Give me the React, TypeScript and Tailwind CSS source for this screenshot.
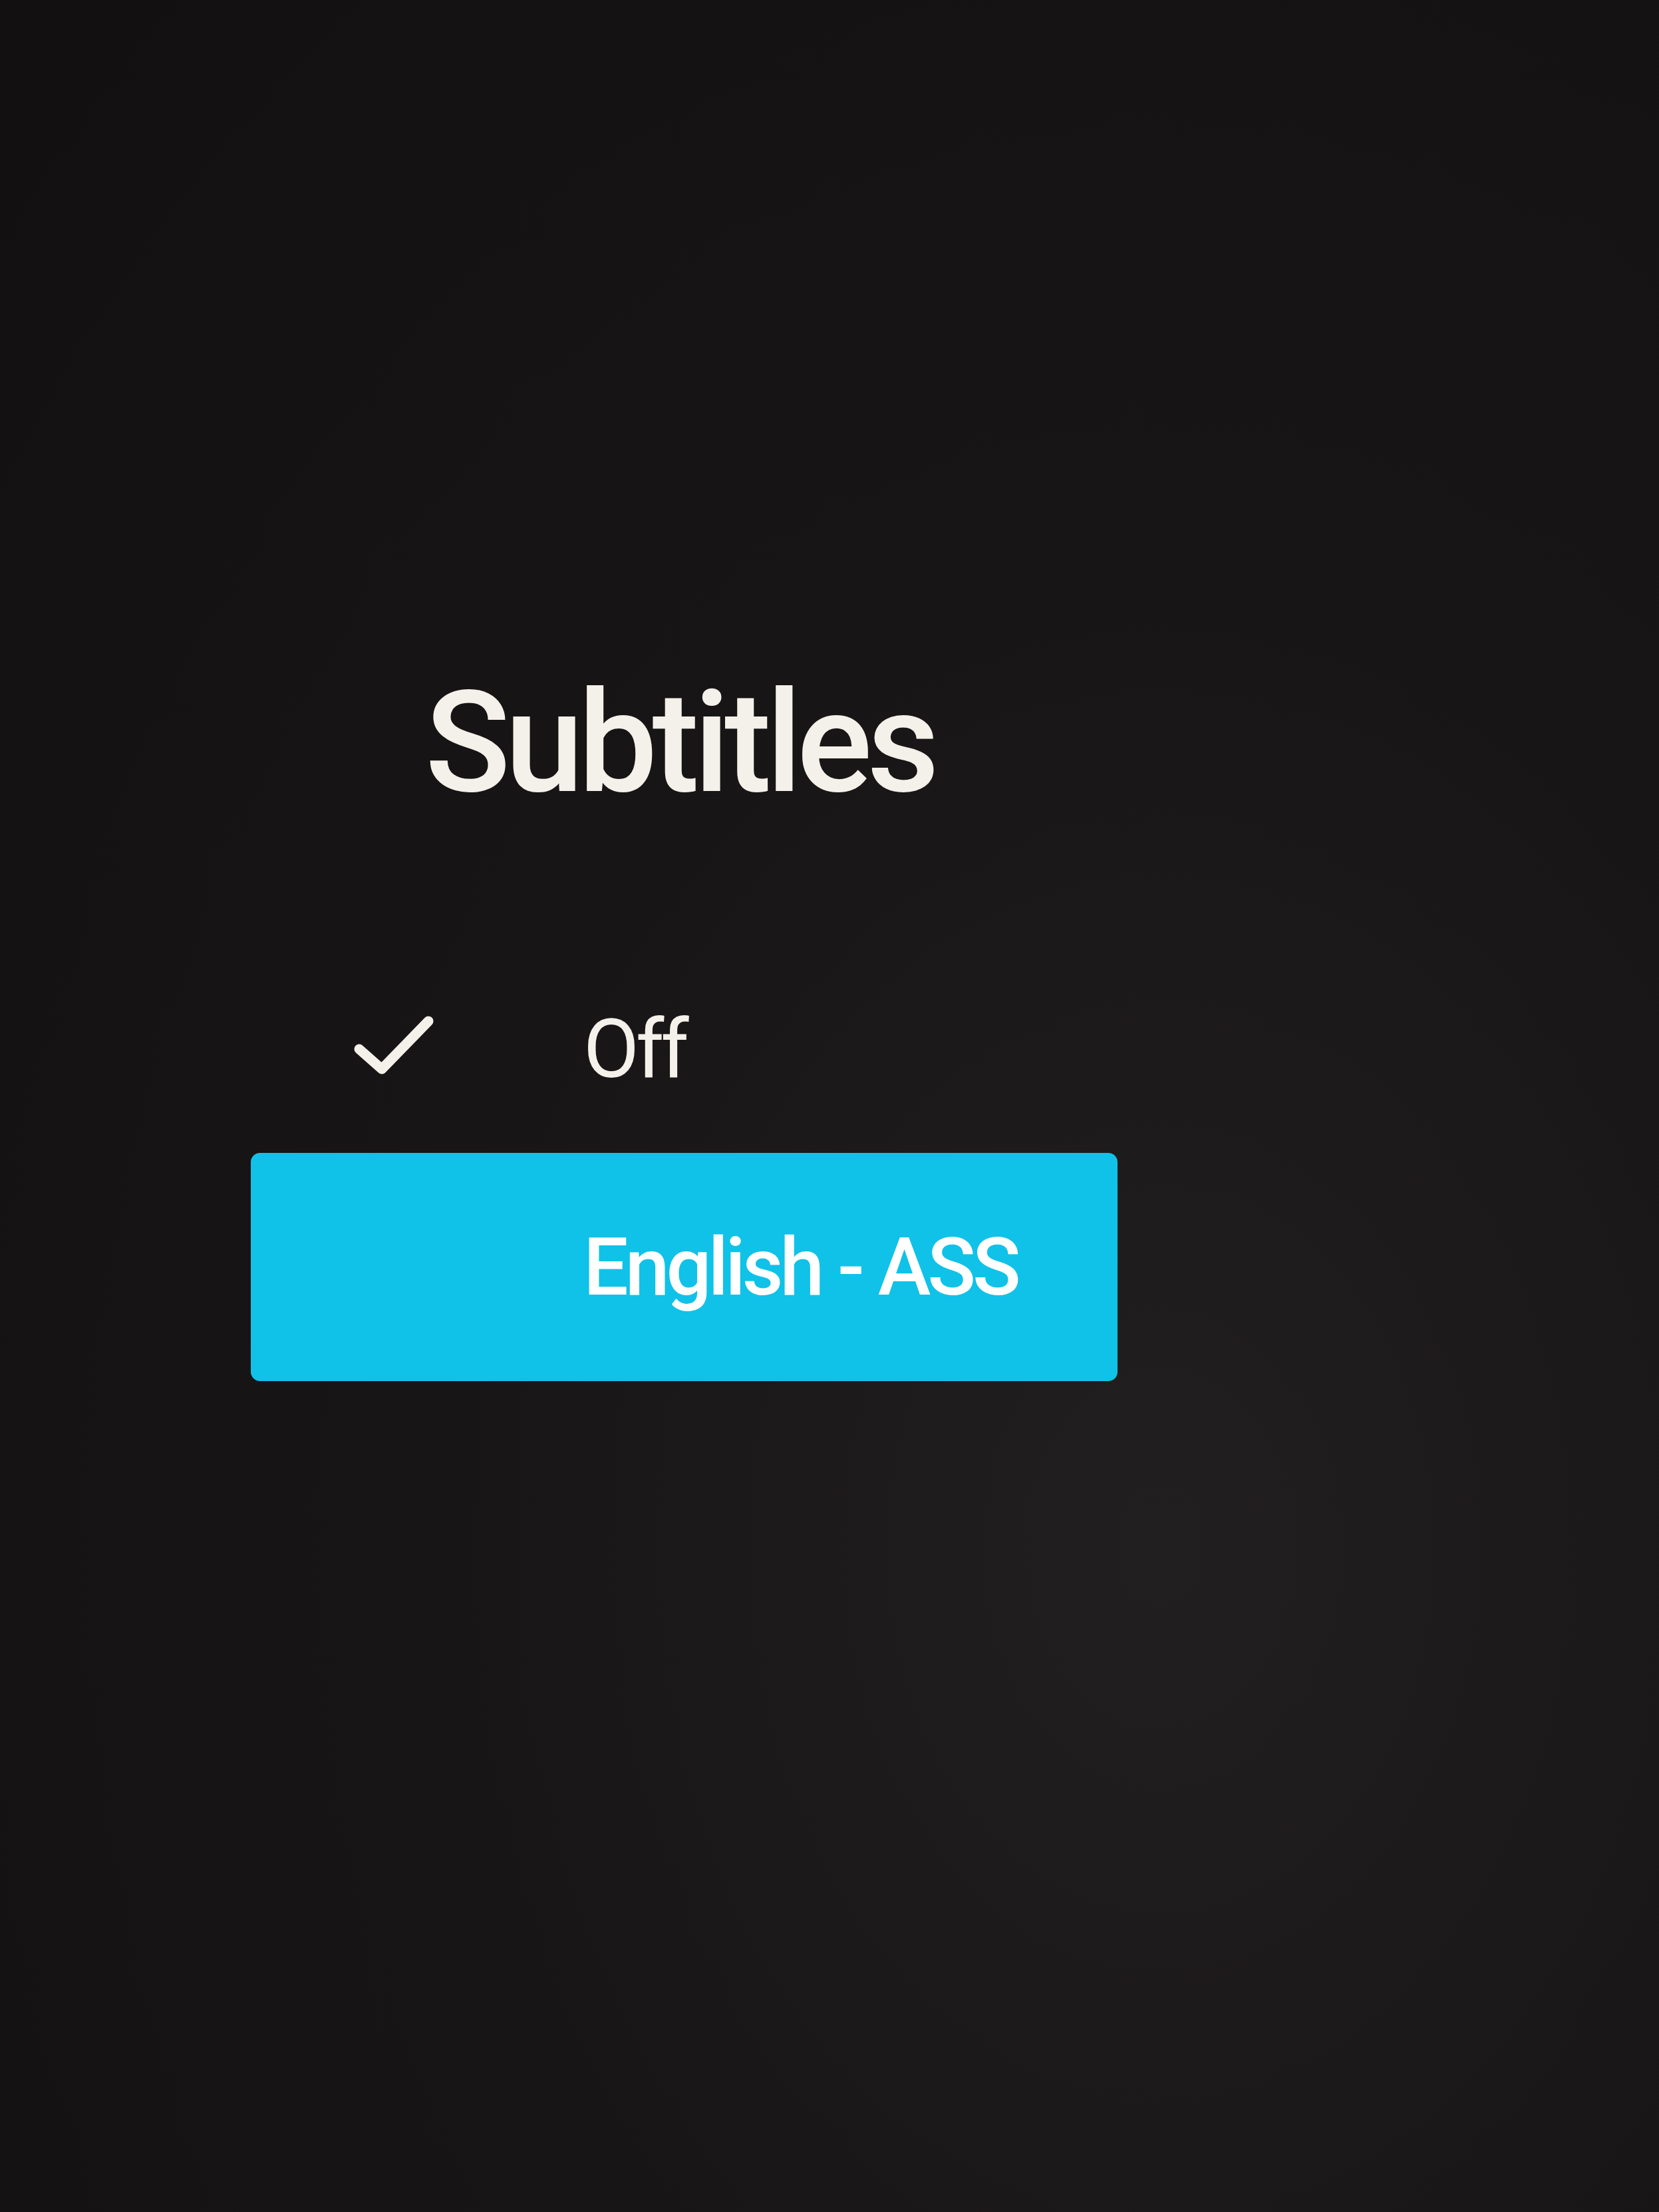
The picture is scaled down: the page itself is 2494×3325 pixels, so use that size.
import React from 'react';

const CheckIcon: React.FC = () => (
  <svg width="124" height="96" viewBox="0 0 124 96" fill="none" className="-mt-[14px]">
    <path d="M10 54 L44 84 L114 12" stroke="#f4f1ea" strokeWidth="15" strokeLinecap="round" strokeLinejoin="round" />
  </svg>
);

const options = [
  { label: 'Off', checked: true },
  { label: 'English - ASS', checked: false },
];

export default function App() {
  const focused = 1;
  return (
    <div
      className="min-h-[3325px] w-full bg-[radial-gradient(ellipse_at_70%_70%,#221f20_0%,#171516_45%,#121011_100%)] text-[#f4f1ea]"
      style={{ fontFamily: 'Roboto, "Noto Sans", sans-serif' }}
    >
      <div className="ml-[377px] flex w-[1303px] flex-col pt-[1011px]">
        {/* Title */}
        <h1 className="ml-[262px] text-[212px] font-medium leading-none tracking-[-8px]">Subtitles</h1>

        {/* Track list */}
        <div className="mt-[300px] flex flex-col">
          {options.map((opt, i) => (
            <div
              key={opt.label}
              className={
                i === focused
                  ? 'mt-[100px] flex h-[343px] items-center rounded-[14px] bg-[#10c2e8]'
                  : 'flex h-[110px] items-center'
              }
            >
              <div className="flex w-[500px] items-center pl-[153px]">{opt.checked && <CheckIcon />}</div>
              <span
                className={
                  i === focused
                    ? 'text-[120px] font-medium leading-none tracking-[-5px] text-white'
                    : 'text-[122px] font-normal leading-none tracking-[-5px]'
                }
              >
                {opt.label}
              </span>
            </div>
          ))}
        </div>
      </div>
    </div>
  );
}
